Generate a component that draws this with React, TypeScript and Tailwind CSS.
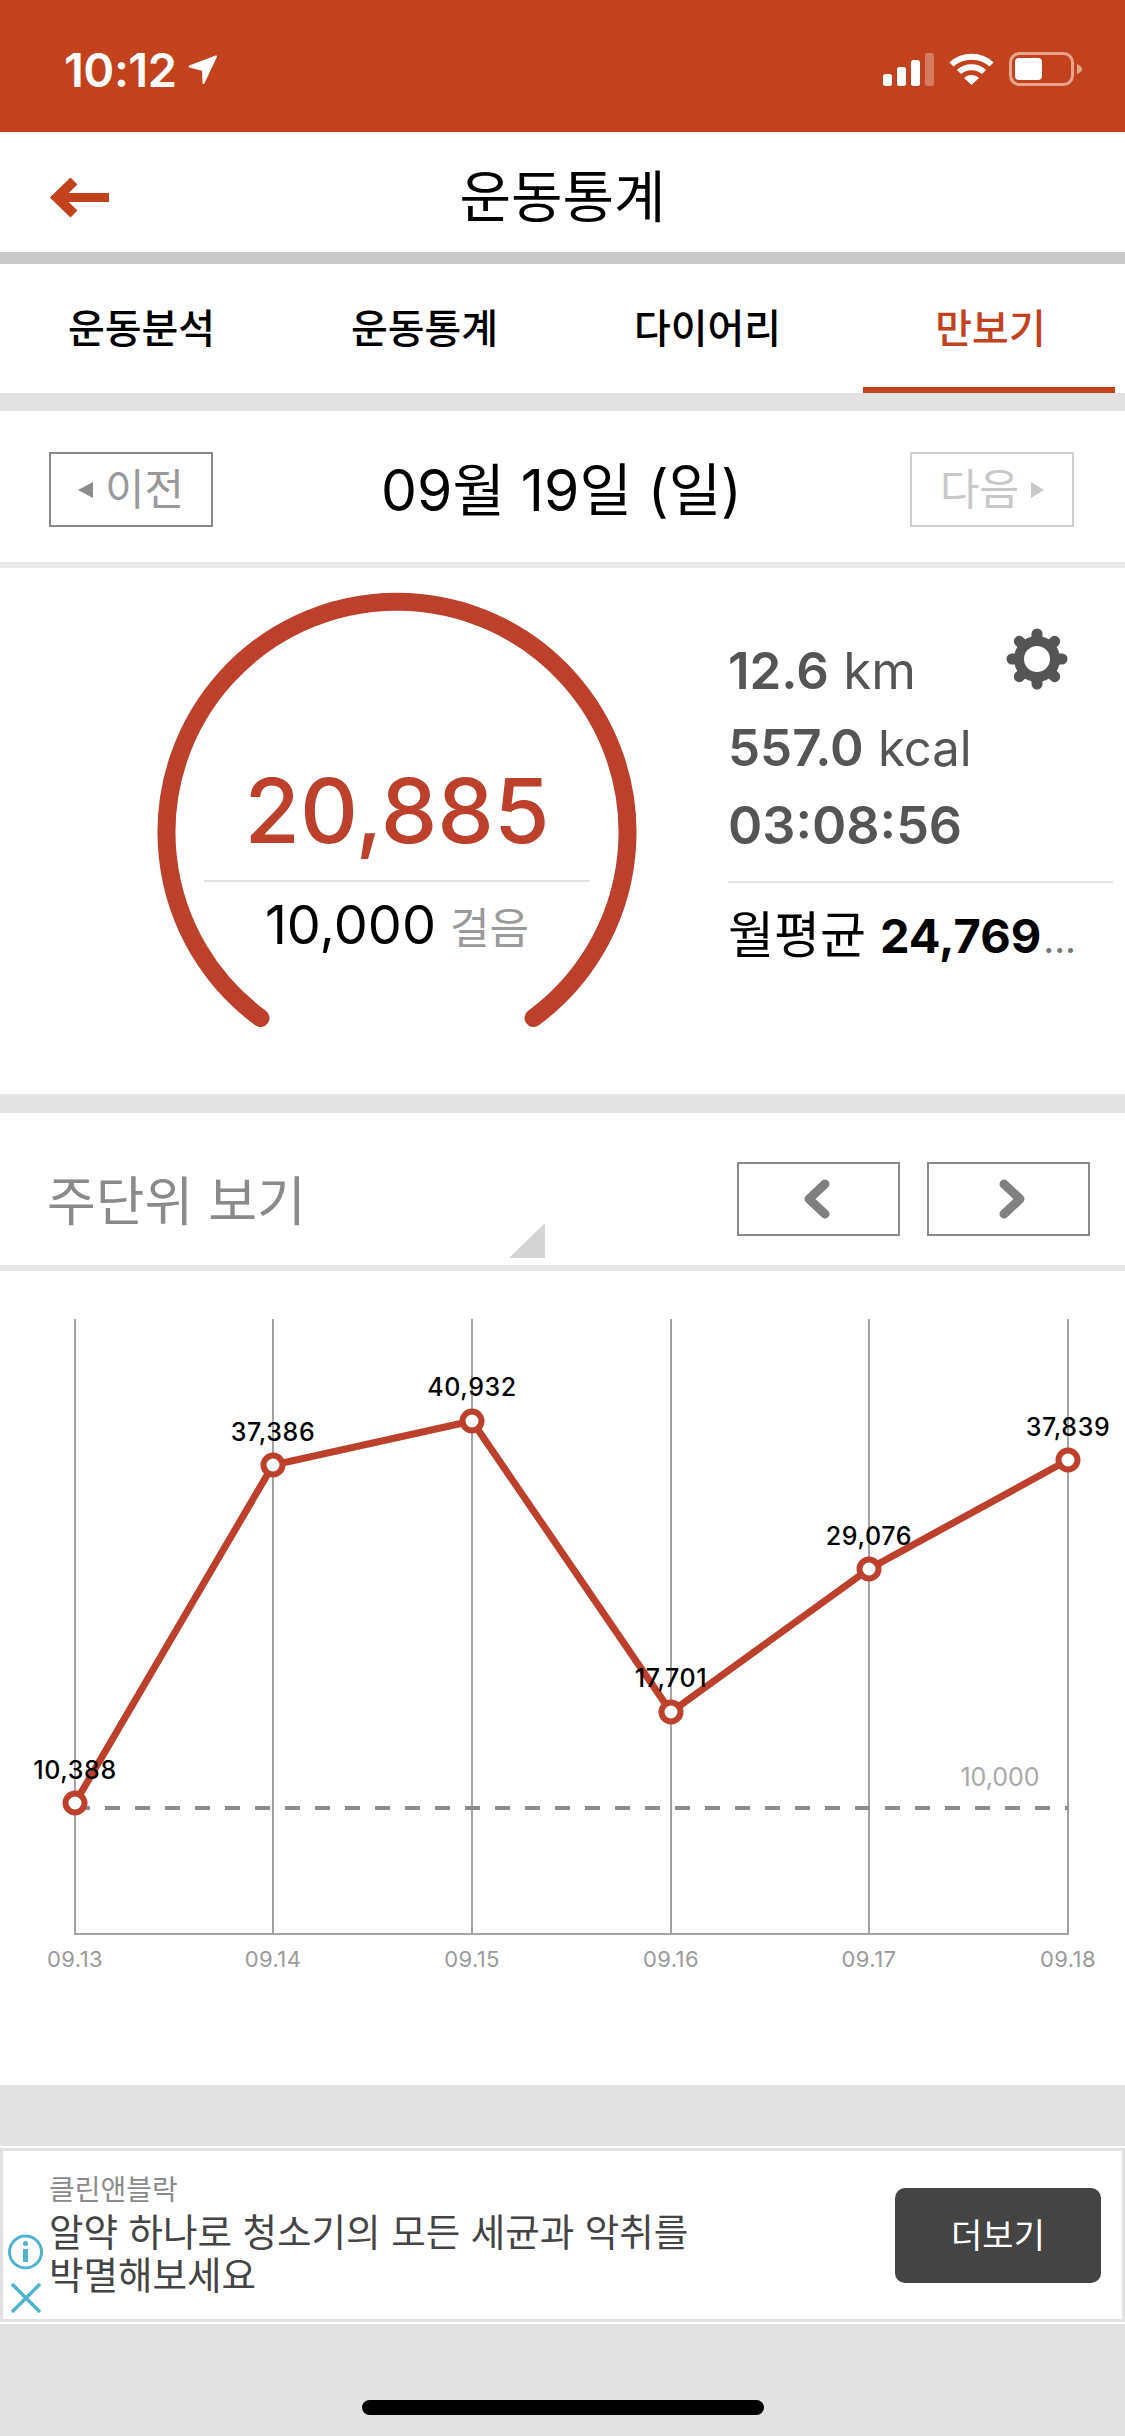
const POINTS = [
  { x: 75, y: 1803, label: "10,388", labelY: 1769, date: "09.13" },
  { x: 273, y: 1465, label: "37,386", labelY: 1431, date: "09.14" },
  { x: 472, y: 1421, label: "40,932", labelY: 1386, date: "09.15" },
  { x: 671, y: 1712, label: "17,701", labelY: 1677, date: "09.16" },
  { x: 869, y: 1569, label: "29,076", labelY: 1535, date: "09.17" },
  { x: 1068, y: 1460, label: "37,839", labelY: 1426, date: "09.18" },
];

// chart section starts at y=1271 of the page
const TOP = 1271;

function GearIcon() {
  const angles = [0, 45, 90, 135, 180, 225, 270, 315];
  return (
    <svg width="62" height="62" viewBox="-31 -31 62 62" fill="none" stroke="#555555" className="absolute right-[45px] top-[34px]">
      <circle r="18" strokeWidth="10" />
      {angles.map((a) => (
        <line key={a} x1="0" y1="-20" x2="0" y2="-25" strokeWidth="11" strokeLinecap="round" transform={`rotate(${a})`} />
      ))}
    </svg>
  );
}

function StatusBar() {
  return (
    <div className="flex h-[132px] items-start justify-between bg-[#c2421d] pl-[64px] pr-[43px] pt-[49px] text-white">
      <div className="flex items-center gap-[11px]">
        <span className="text-[47px] leading-[42px] font-semibold tracking-[-0.5px]">10:12</span>
        <svg width="30" height="30" viewBox="0 0 30 30" className="fill-white stroke-white" strokeWidth="2" strokeLinejoin="round">
          <path d="M28 1.5 L1.5 11.5 L15 15 L15.5 28 Z" />
        </svg>
      </div>
      <div className="flex items-center gap-[15px] pt-[3px]">
        <svg width="51" height="33" viewBox="0 0 51 33" className="fill-white">
          <rect x="0" y="21" width="9" height="12" rx="2.5" />
          <rect x="14" y="14" width="9" height="19" rx="2.5" />
          <rect x="28" y="7" width="9" height="26" rx="2.5" />
          <rect x="42" y="0" width="9" height="33" rx="2.5" opacity="0.3" />
        </svg>
        <svg width="45" height="34" viewBox="0 0 45 34" fill="none" className="stroke-white">
          <path d="M2.5 12.5 C13 2 32 2 42.5 12.5" strokeWidth="6" />
          <path d="M10 20 C16.5 13.5 28.5 13.5 35 20" strokeWidth="6" />
          <path d="M22.5 33 L15 26 C19 22 26 22 30 26 Z" className="fill-white stroke-none" />
        </svg>
        <svg width="73" height="34" viewBox="0 0 73 34" fill="none">
          <rect x="1.5" y="1.5" width="62" height="31" rx="9" stroke="#e6a48e" strokeWidth="3" />
          <rect x="6" y="6" width="27" height="22" rx="4" fill="#fff" />
          <path d="M68 12 C71 13 73 15 73 17 C73 19 71 21 68 22 Z" fill="#e6a48e" />
        </svg>
      </div>
    </div>
  );
}

function TitleBar() {
  return (
    <div className="relative flex h-[120px] items-center justify-center bg-white pt-[10px]">
      <svg width="61" height="43" viewBox="0 0 61 43" fill="none" stroke="#c2421d" className="absolute left-[49px] top-[45px]">
        <path d="M25 4 L8 20.5 L25 37" strokeWidth="10" />
        <path d="M8 20.5 L60 20.5" strokeWidth="9" />
      </svg>
      <span className="text-[56px] leading-none text-black">운동통계</span>
    </div>
  );
}

function Tabs() {
  const tabs = ["운동분석", "운동통계", "다이어리", "만보기"];
  return (
    <div className="grid h-[129px] grid-cols-[repeat(4,283px)] overflow-hidden bg-white">
      {tabs.map((t, i) => (
        <div key={t} className="relative flex items-center justify-center">
          <span className={`text-[40px] leading-none font-medium ${i === 3 ? "text-[#c2421d]" : "text-black"}`}>{t}</span>
          {i === 3 && <div className="absolute bottom-0 left-[14px] h-[6px] w-[252px] bg-[#c2421d]" />}
        </div>
      ))}
    </div>
  );
}

function DateRow() {
  return (
    <div className="flex h-[151px] items-start justify-between bg-white pl-[49px] pr-[51px] pt-[41px]">
      <div className="flex h-[75px] w-[164px] items-center justify-center gap-[12px] border-2 border-[#8a8a8a] text-[#999999]">
        <svg width="15" height="16" viewBox="0 0 15 16" className="fill-[#8c8c8c]">
          <path d="M15 0 L15 16 L0 8 Z" />
        </svg>
        <span className="text-[43px] leading-none">이전</span>
      </div>
      <span className="text-[57px] leading-[78px] text-black">09월 19일 (일)</span>
      <div className="flex h-[75px] w-[164px] items-center justify-center gap-[12px] border-2 border-[#cfcfcf] text-[#c8c8c8]">
        <span className="text-[43px] leading-none">다음</span>
        <svg width="13" height="16" viewBox="0 0 13 16" className="fill-[#c8c8c8]">
          <path d="M0 0 L13 8 L0 16 Z" />
        </svg>
      </div>
    </div>
  );
}

function Gauge() {
  return (
    <div className="relative h-[445px] w-[478px]">
      <svg width="478" height="445" viewBox="0 0 478 445" fill="none" className="absolute inset-0 overflow-visible">
        <path d="M102.5 424 A230.5 230.5 0 1 1 375.5 424" stroke="#bc402b" strokeWidth="18" strokeLinecap="round" />
      </svg>
      <div className="relative flex flex-col items-center pt-[157px]">
        <span className="text-[90px] leading-[120px] font-[550] text-[#bc402b]">20,885</span>
        <div className="mt-[9px] h-[2px] w-[386px] bg-[#e2e2e2]" />
        <div className="mt-[13px] flex items-baseline gap-[14px]">
          <span className="text-[54px] leading-[60px] text-black">10,000</span>
          <span className="text-[43px] leading-[60px] text-[#9a9a9a]">걸음</span>
        </div>
      </div>
    </div>
  );
}

function Summary() {
  return (
    <div className="flex h-[526px] items-start bg-white pl-[158px] pt-[26px]">
      <Gauge />
      <div className="relative ml-[92px] w-[385px] pt-[38px] text-[#555555]">
        <GearIcon />
        <div className="text-[51px] leading-[77px]"><span className="font-semibold">12.6</span> km</div>
        <div className="text-[51px] leading-[77px]"><span className="font-semibold">557.0</span> <span className="text-[49px]">kcal</span></div>
        <div className="text-[52px] leading-[77px] font-semibold">03:08:56</div>
        <div className="mt-[17px] h-[2px] w-full bg-[#e2e2e2]" />
        <div className="mt-[21px] flex items-baseline leading-[62px] text-black">
          <span className="text-[50px]">월평균</span>
          <span className="ml-[14px] text-[47px] font-bold">24,769</span>
          <span className="ml-[2px] text-[38px] text-[#777777]">...</span>
        </div>
      </div>
    </div>
  );
}

function WeekHeader() {
  return (
    <div className="relative flex h-[152px] items-start justify-between bg-white pl-[47px] pr-[35px]">
      <span className="pt-[58px] text-[53px] leading-[62px] text-[#8a8a8a]">주단위 보기</span>
      <svg width="36" height="35" viewBox="0 0 36 35" className="absolute left-[509px] top-[110px] fill-[#d4d4d4]">
        <path d="M36 0 L36 35 L0 35 Z" />
      </svg>
      <div className="flex gap-[27px] pt-[49px]">
        <div className="flex h-[74px] w-[163px] items-center justify-center border-2 border-[#8a8a8a] pr-[6px]">
          <svg width="30" height="40" viewBox="0 0 30 40" fill="none" stroke="#808080" strokeWidth="9" strokeLinecap="round" strokeLinejoin="round">
            <path d="M24 5 L8 20 L24 35" />
          </svg>
        </div>
        <div className="flex h-[74px] w-[163px] items-center justify-center border-2 border-[#8a8a8a] pl-[8px]">
          <svg width="30" height="40" viewBox="0 0 30 40" fill="none" stroke="#808080" strokeWidth="9" strokeLinecap="round" strokeLinejoin="round">
            <path d="M6 5 L22 20 L6 35" />
          </svg>
        </div>
      </div>
    </div>
  );
}

function Chart() {
  const line = POINTS.map((p) => `${p.x},${p.y - TOP}`).join(" ");
  return (
    <div className="h-[814px] bg-white">
      <svg width="1125" height="814" viewBox="0 0 1125 814" fill="none" className="block">
        {POINTS.map((p) => (
          <line key={p.x} x1={p.x} x2={p.x} y1="48" y2="663" stroke="#a3a3a3" strokeWidth="2" />
        ))}
        <line x1="74" x2="1069" y1="663" y2="663" stroke="#a3a3a3" strokeWidth="2" />
        <line x1="75" x2="1068" y1="537" y2="537" stroke="#8c8c8c" strokeWidth="4" strokeDasharray="15 15" />
        <polyline points={line} stroke="#bc402b" strokeWidth="7" />
        {POINTS.map((p) => (
          <circle key={p.x} cx={p.x} cy={p.y - TOP} r="9.5" fill="#fff" stroke="#bc402b" strokeWidth="6" />
        ))}
        {POINTS.map((p) => (
          <text key={p.x} x={p.x} y={p.labelY - TOP + 10} textAnchor="middle" fill="#000" fontSize="25" fontWeight="500" letterSpacing="0.6">
            {p.label}
          </text>
        ))}
        {POINTS.map((p) => (
          <text key={p.x} x={p.x} y="696" textAnchor="middle" fill="#9a9a9a" fontSize="22" letterSpacing="0.4">
            {p.date}
          </text>
        ))}
        <text x="1000" y="515" textAnchor="middle" fill="#a8a8a8" fontSize="25">10,000</text>
      </svg>
    </div>
  );
}

function Ad() {
  return (
    <div className="mt-[61px] border-y-2 border-white">
      <div className="relative mx-[3px] my-[3px] flex h-[168px] items-center justify-between bg-white pl-[46px] pr-[21px]">
        <div className="flex flex-col">
          <span className="text-[28px] leading-[34px] text-[#8a8a8a]">클린앤블락</span>
          <span className="mt-[4px] text-[37.5px] leading-[43px] text-[#444444]">알약 하나로 청소기의 모든 세균과 악취를</span>
          <span className="text-[37.5px] leading-[43px] text-[#444444]">박멸해보세요</span>
        </div>
        <div className="flex h-[95px] w-[206px] items-center justify-center rounded-[10px] bg-[#444444] text-[34px] text-white">더보기</div>
        <svg width="35" height="79" viewBox="0 0 35 79" fill="none" stroke="#4fb3cf" className="absolute left-[5px] top-[83px]">
          <circle cx="17.5" cy="18" r="16" strokeWidth="3" />
          <circle cx="17.5" cy="9.5" r="2.5" fill="#4fb3cf" stroke="none" />
          <line x1="17.5" y1="15" x2="17.5" y2="28" strokeWidth="5" />
          <path d="M4 50 L32 78 M32 50 L4 78" strokeWidth="3.5" />
        </svg>
      </div>
    </div>
  );
}

export default function App() {
  return (
    <div className="flex h-[2436px] w-[1125px] flex-col overflow-hidden bg-[#e2e2e2] font-['Inter','Noto_Sans_CJK_KR',sans-serif]">
      <StatusBar />
      <TitleBar />
      <div className="h-[12px] bg-[#c9c9c9]" />
      <Tabs />
      <div className="h-[18px] bg-[#e2e2e2]" />
      <DateRow />
      <div className="h-[6px] bg-[#e8e8e8]" />
      <Summary />
      <div className="h-[19px] bg-[#e4e4e4]" />
      <WeekHeader />
      <div className="h-[6px] bg-[#e6e6e6]" />
      <Chart />
      <Ad />
      <div className="mx-auto mt-[76px] h-[15px] w-[402px] rounded-full bg-black" />
    </div>
  );
}
